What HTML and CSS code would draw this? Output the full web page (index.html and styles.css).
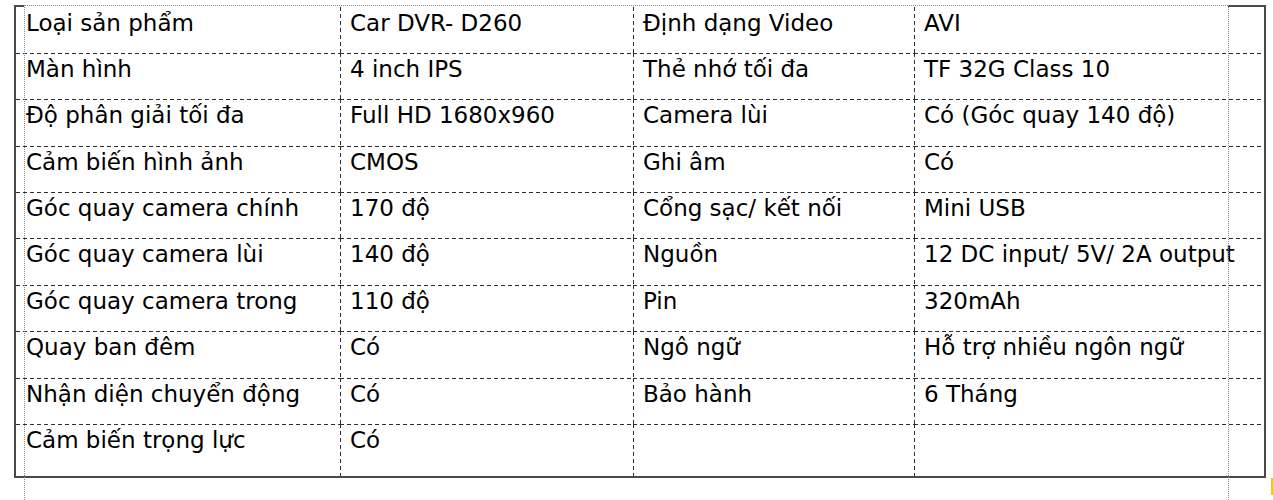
FILE: index.html
```html
<!DOCTYPE html>
<html lang="vi">
<head>
<meta charset="utf-8">
<title>Thông số Car DVR D260</title>
<link rel="stylesheet" href="styles.css">
</head>
<body>
<div class="page">
  <div class="guide guide-left"></div>
  <div class="guide guide-right"></div>
  <div class="guide guide-top"></div>
  <div class="cursor-mark"></div>
  <table class="spec">
    <colgroup>
      <col class="c1"><col class="c2"><col class="c3"><col class="c4">
    </colgroup>
    <tbody>
      <tr class="h46"><td>Loại sản phẩm</td><td>Car DVR- D260</td><td>Định dạng Video</td><td>AVI</td></tr>
      <tr class="h46"><td>Màn hình</td><td>4 inch IPS</td><td>Thẻ nhớ tối đa</td><td>TF 32G Class 10</td></tr>
      <tr class="h47"><td>Độ phân giải tối đa</td><td>Full HD 1680x960</td><td>Camera lùi</td><td>Có (Góc quay 140 độ)</td></tr>
      <tr class="h46"><td>Cảm biến hình ảnh</td><td>CMOS</td><td>Ghi âm</td><td>Có</td></tr>
      <tr class="h46"><td>Góc quay camera chính</td><td>170 độ</td><td>Cổng sạc/ kết nối</td><td>Mini USB</td></tr>
      <tr class="h47"><td>Góc quay camera lùi</td><td>140 độ</td><td>Nguồn</td><td>12 DC input/ 5V/ 2A output</td></tr>
      <tr class="h46"><td>Góc quay camera trong</td><td>110 độ</td><td>Pin</td><td>320mAh</td></tr>
      <tr class="h47"><td>Quay ban đêm</td><td>Có</td><td>Ngô ngữ</td><td>Hỗ trợ nhiều ngôn ngữ</td></tr>
      <tr class="h46"><td>Nhận diện chuyển động</td><td>Có</td><td>Bảo hành</td><td>6 Tháng</td></tr>
      <tr class="h52"><td>Cảm biến trọng lực</td><td>Có</td><td></td><td></td></tr>
    </tbody>
  </table>
</div>
</body>
</html>
```

FILE: styles.css
```css
html, body {
  margin: 0;
  padding: 0;
  background: #ffffff;
}

body {
  font-family: "DejaVu Sans", Verdana, sans-serif;
  color: #000;
  width: 1273px;
  height: 500px;
  overflow: hidden;
}

.page {
  position: relative;
  padding: 5px 0 0 14px;
}

.spec {
  border-collapse: separate;
  border-spacing: 0;
  table-layout: fixed;
  width: 1252px;
  border: 2px solid #4a4a4a;
  font-size: 23px;
}

.c1 { width: 324px; }
.c2 { width: 293px; }
.c3 { width: 281px; }
.c4 { width: 350px; }

.spec td {
  box-sizing: border-box;
  border: 0;
  padding: 3px 0 0 10px;
  vertical-align: top;
  white-space: nowrap;
  overflow: visible;
  line-height: 27px;
  background-repeat: no-repeat;
  background-position: left top, left top;
  background-size: 100% 1px, 1px 100%;
  background-image:
    repeating-linear-gradient(90deg, #2e2e2e 0 4px, transparent 4px 7px),
    repeating-linear-gradient(180deg, #2e2e2e 0 4px, transparent 4px 7px);
}

.spec td:first-child {
  padding-left: 10px;
  background-image:
    repeating-linear-gradient(90deg, #2e2e2e 0 4px, transparent 4px 7px),
    none;
}

.spec tr:first-child td {
  background-image:
    none,
    repeating-linear-gradient(180deg, #2e2e2e 0 4px, transparent 4px 7px);
}

.spec tr:first-child td:first-child {
  background-image: none;
}

.h46 td { height: 46px; }
.h47 td { height: 47px; }
.h52 td { height: 52px; }

.guide {
  position: absolute;
  pointer-events: none;
}

.guide-left {
  left: 24px;
  top: 5px;
  height: 495px;
  border-left: 1px dotted #8a8a8a;
}

.guide-right {
  left: 1228px;
  top: 5px;
  height: 495px;
  border-left: 1px dotted #8a8a8a;
}

.guide-top {
  left: 24px;
  top: 5px;
  width: 1204px;
  height: 2px;
  background: #fff;
  border-top: 1px dotted #8a8a8a;
  box-sizing: border-box;
}

.cursor-mark {
  left: 1271px;
  top: 478px;
  width: 2px;
  height: 17px;
  position: absolute;
  background: #f2c230;
}
```
